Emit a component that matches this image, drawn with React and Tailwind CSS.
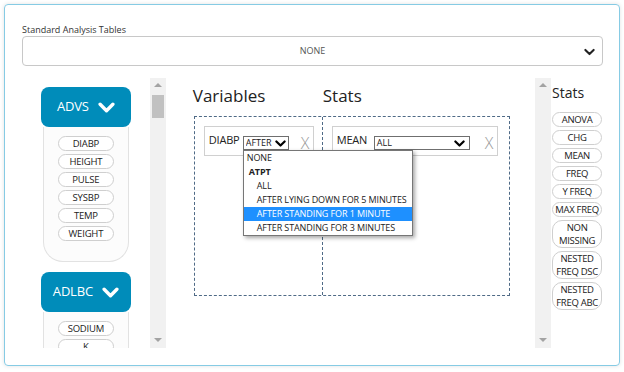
import React from 'react';

const advs = ['DIABP', 'HEIGHT', 'PULSE', 'SYSBP', 'TEMP', 'WEIGHT'];
const adlbc = ['SODIUM', 'K'];
const stats = ['ANOVA', 'CHG', 'MEAN', 'FREQ', 'Y FREQ', 'MAX FREQ', 'NON MISSING', 'NESTED FREQ DSC', 'NESTED FREQ ABC'];

const options = [
  { label: 'NONE', cls: 'pl-[3px]' },
  { label: 'ATPT', cls: 'pl-[5px] font-bold' },
  { label: 'ALL', cls: 'pl-[13px]' },
  { label: 'AFTER LYING DOWN FOR 5 MINUTES', cls: 'pl-[13px]' },
  { label: 'AFTER STANDING FOR 1 MINUTE', cls: 'pl-[13px] bg-[#1e90ff] text-white' },
  { label: 'AFTER STANDING FOR 3 MINUTES', cls: 'pl-[13px]' },
];

function Chevron({ className = '', stroke = 'currentColor', width = 3 }) {
  return (
    <svg viewBox="0 0 16 10" className={className} fill="none">
      <polyline points="2,2 8,8 14,2" stroke={stroke} strokeWidth={width} strokeLinecap="round" strokeLinejoin="round" />
    </svg>
  );
}

function Scrollbar({ thumb }) {
  return (
    <div className="w-[16px] h-full bg-[#f1f1f1] flex flex-col items-center shrink-0">
      <svg viewBox="0 0 8 4" className="w-[8px] h-[4px] mt-[5px] fill-[#a3a3a3]">
        <polygon points="0,4 4,0 8,4" />
      </svg>
      {thumb ? <div className="w-[12px] h-[23px] bg-[#c1c1c1] mt-[8px]" /> : null}
      <div className="flex-1" />
      <svg viewBox="0 0 8 4" className="w-[8px] h-[4px] mb-[6px] fill-[#a3a3a3]">
        <polygon points="0,0 8,0 4,4" />
      </svg>
    </div>
  );
}

function Group({ name, items, last }) {
  return (
    <div className="flex flex-col items-center">
      <div className="w-[90px] h-[40px] rounded-[8px] bg-[#008cba] flex items-center justify-center gap-[9px] text-white text-[13px]">
        <span className="tracking-[-0.2px]">{name}</span>
        <Chevron className="w-[17px] h-[11px]" stroke="#fff" width={3.2} />
      </div>
      <div className={`w-[86px] border border-t-0 border-[#e2e2e2] bg-[#fcfcfc] rounded-b-[20px] pt-[9px] ${last ? 'pb-[30px]' : 'pb-[20px]'} flex flex-col items-center gap-[3px]`}>
        {items.map((v) => (
          <div key={v} className="w-[56px] h-[15px] border border-[#cfcfcf] rounded-full text-[9.5px] leading-[13px] tracking-[-0.2px] text-center text-[#222] bg-white">
            {v}
          </div>
        ))}
      </div>
    </div>
  );
}

export default function App() {
  return (
    <div className="w-[624px] h-[372px] bg-white p-[4px] font-['Open_Sans',sans-serif] text-[#222]">
      <div className="h-[362px] border border-[#86cbe4] rounded-[4px] shadow-[0_0_4px_rgba(0,0,0,0.12)] pl-[17px] pr-[16px] pt-[18px]">
        <div className="text-[9px] leading-[13px] text-[#333]">Standard Analysis Tables</div>
        <div className="h-[30px] border border-[#c8c8c8] rounded-[4px] flex items-center relative">
          <span className="flex-1 text-center text-[9px] text-[#555]">NONE</span>
          <Chevron className="absolute right-[7px] top-[11px] w-[11px] h-[8px] text-[#222]" width={3} />
        </div>

        <div className="mt-[12px] h-[270px] flex">
          {/* dataset column */}
          <div className="w-[128px] h-full overflow-hidden pt-[9px] flex flex-col gap-[10px]">
            <Group name="ADVS" items={advs} />
            <Group name="ADLBC" items={adlbc} last />
          </div>
          <Scrollbar thumb />

          {/* table builder */}
          <div className="w-[370px] h-full pl-[28px]">
            <div className="flex text-[17px] leading-[22px] text-[#222] pt-[7px] h-[38px]">
              <span className="w-[130px] -ml-[1px]">Variables</span>
              <span>Stats</span>
            </div>
            <div className="w-[316px] h-[180px] border border-dashed border-[#4f6a86] flex">
              <div className="w-[128px] h-full border-r border-dashed border-[#4f6a86] pl-[9px] pt-[9px]">
                <div className="w-[110px] h-[30px] border border-[#d0d0d0] flex items-start pl-[4px] pt-[5px]">
                  <span className="text-[11px] leading-[16px] tracking-[-0.2px] text-[#222] w-[34px]">DIABP</span>
                  <div className="relative mt-[4px]">
                    <div className="w-[46px] h-[14px] border border-[#6f6f6f] flex items-center pl-[2px] pr-[2px] bg-white">
                      <span className="flex-1 overflow-hidden whitespace-nowrap text-[9px] leading-[12px] w-[26px]">AFTER</span>
                      <Chevron className="w-[11px] h-[7px] shrink-0 text-black" width={3.2} />
                    </div>
                    <div className="absolute left-0 top-[14px] w-[170px] border border-[#767676] bg-white shadow-[2px_2px_4px_rgba(0,0,0,0.35)] z-10">
                      {options.map((o) => (
                        <div key={o.label} className={`h-[14px] text-[9px] leading-[14px] tracking-[-0.1px] whitespace-nowrap ${o.cls}`}>
                          {o.label}
                        </div>
                      ))}
                    </div>
                  </div>
                  <span className="ml-[12px] mt-[2px] text-[16px] leading-[18px] font-light text-[#999]">X</span>
                </div>
              </div>
              <div className="flex-1 h-full pl-[9px] pt-[9px]">
                <div className="w-[166px] h-[30px] border border-[#d0d0d0] flex items-start pl-[4px] pt-[5px]">
                  <span className="text-[11px] leading-[16px] tracking-[-0.2px] text-[#222] w-[37px]">MEAN</span>
                  <div className="mt-[4px] w-[96px] h-[14px] border border-[#6f6f6f] flex items-center pl-[2px] pr-[4px] bg-white">
                    <span className="flex-1 text-[9px] leading-[12px]">ALL</span>
                    <Chevron className="w-[11px] h-[7px] shrink-0 text-black" width={3.2} />
                  </div>
                  <span className="ml-[15px] mt-[2px] text-[16px] leading-[18px] font-light text-[#999]">X</span>
                </div>
              </div>
            </div>
          </div>
          <Scrollbar />

          {/* stats list */}
          <div className="w-[52px] h-full pl-[1px] pt-[5px] overflow-hidden">
            <div className="text-[14px] leading-[19px] h-[29px]">Stats</div>
            <div className="flex flex-col gap-[3px]">
              {stats.map((s) => (
                <div key={s} className="w-[50px] min-h-[15px] border border-[#cfcfcf] rounded-[10px] text-[9.5px] leading-[13px] tracking-[-0.3px] text-center text-[#222] px-0">
                  {s}
                </div>
              ))}
            </div>
          </div>
        </div>
      </div>
    </div>
  );
}
